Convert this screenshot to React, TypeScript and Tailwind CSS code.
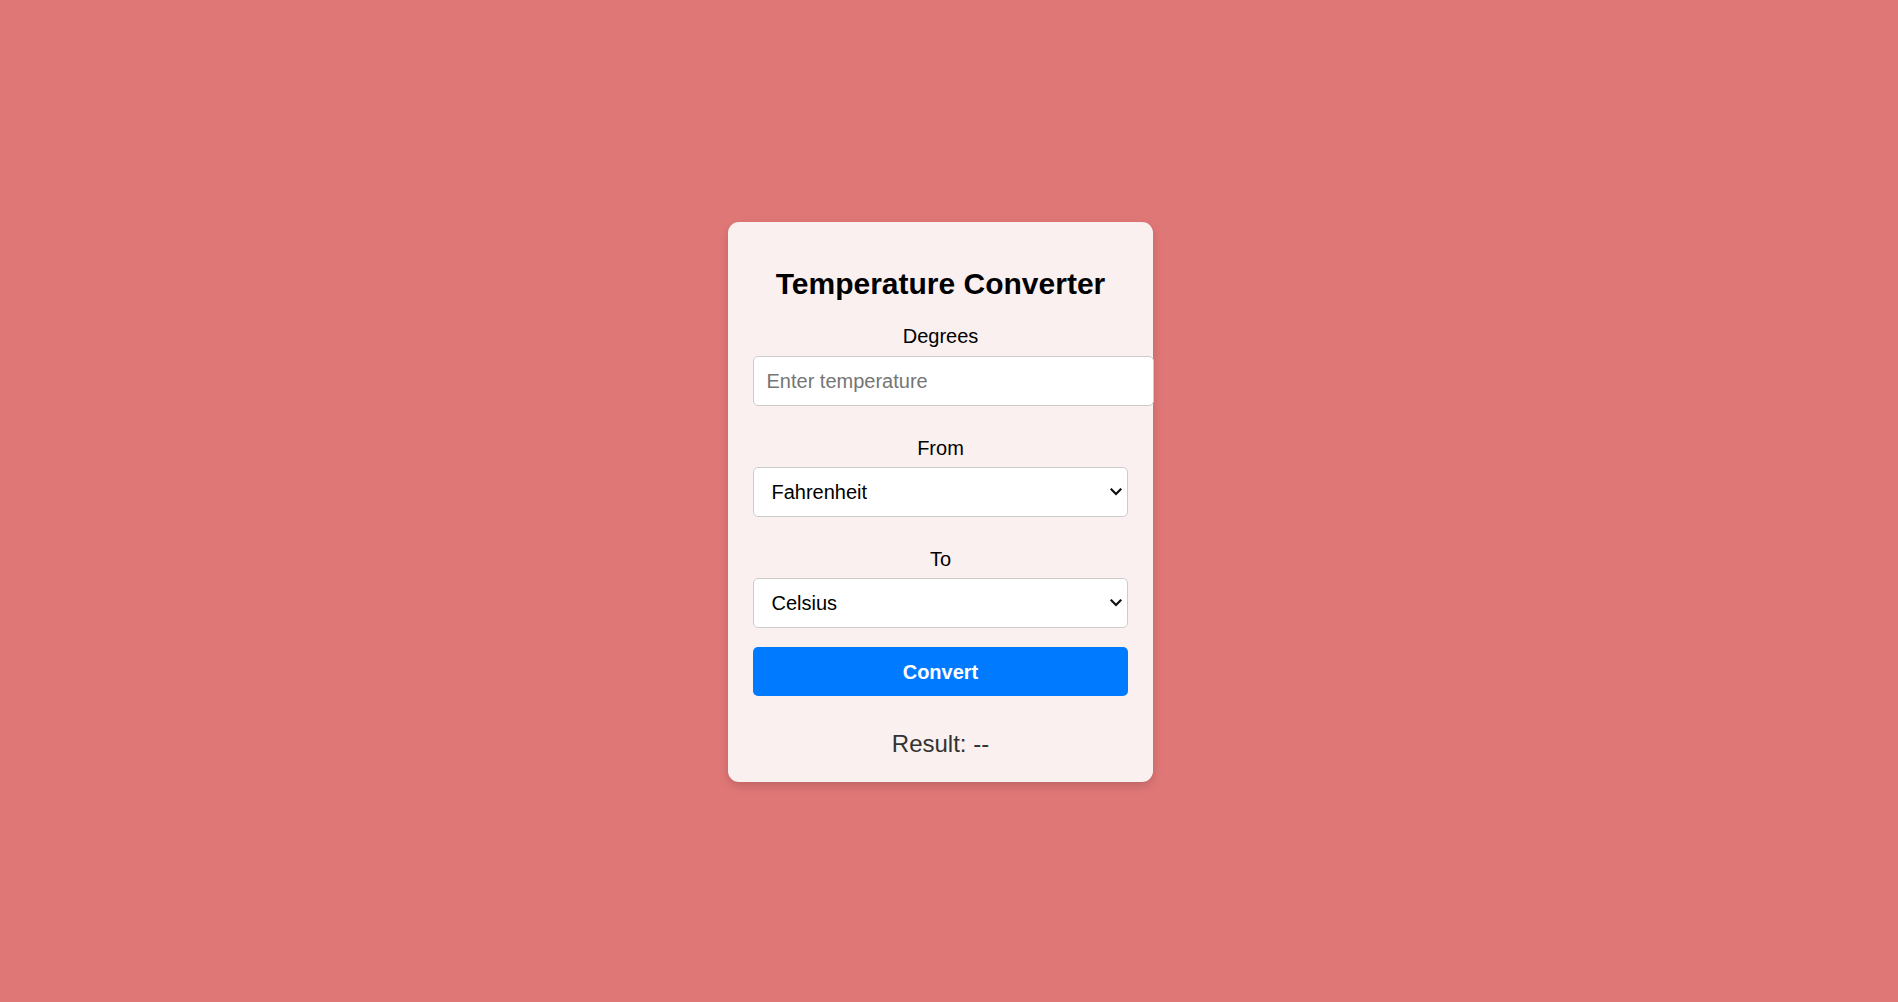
import { useState } from 'react';

const units = ['Celsius', 'Fahrenheit', 'Kelvin'];

const convert = (value: number, from: string, to: string) => {
  let celsius = value;
  if (from === 'Fahrenheit') celsius = ((value - 32) * 5) / 9;
  if (from === 'Kelvin') celsius = value - 273.15;
  if (to === 'Fahrenheit') return (celsius * 9) / 5 + 32;
  if (to === 'Kelvin') return celsius + 273.15;
  return celsius;
};

const UnitSelect = ({ value, onChange }: { value: string; onChange: (v: string) => void }) => (
  <div className="relative">
    <select
      value={value}
      onChange={(e) => onChange(e.target.value)}
      className="block h-[50px] w-full appearance-none rounded-[5px] border border-[#ccc] bg-white pr-[36px] pl-[17.5px] text-left text-[20px] text-black"
    >
      {units.map((unit) => (
        <option key={unit}>{unit}</option>
      ))}
    </select>
    <svg
      className="pointer-events-none absolute top-1/2 right-[6px] -translate-y-1/2"
      width="12"
      height="8"
      viewBox="0 0 12 8"
      fill="none"
    >
      <path d="M1.5 1.5 L6 6 L10.5 1.5" stroke="#111" strokeWidth="2.2" strokeLinecap="square" />
    </svg>
  </div>
);

export default function App() {
  const [degrees, setDegrees] = useState('');
  const [from, setFrom] = useState('Fahrenheit');
  const [to, setTo] = useState('Celsius');
  const [result, setResult] = useState('--');

  const handleConvert = () => {
    const value = parseFloat(degrees);
    if (Number.isNaN(value)) {
      setResult('--');
      return;
    }
    setResult(convert(value, from, to).toFixed(2));
  };

  return (
    <div className="flex min-h-screen items-center justify-center bg-[#e07777] font-['Liberation_Sans',Arial,sans-serif]">
      <div className="mt-[2px] mr-[17px] w-[425px] rounded-[11px] bg-[#fbf0f0] px-[25px] pt-[25px] pb-[25px] text-center shadow-[0_4px_10px_rgba(0,0,0,0.15)]">
        <h2 className="mt-[20px] text-[30px] leading-[34px] font-bold text-black">Temperature Converter</h2>

        <label className="mt-[24px] mb-[8px] block text-[20px] leading-[23px] text-black">Degrees</label>
        <input
          type="number"
          value={degrees}
          onChange={(e) => setDegrees(e.target.value)}
          placeholder="Enter temperature"
          className="block h-[50px] w-[401px] rounded-[5px] border border-[#ccc] bg-white px-[12.5px] text-left text-[20px] text-black placeholder:text-[#757575] focus:outline-none"
        />

        <label className="mt-[31px] mb-[7px] block text-[20px] leading-[23px] text-black">From</label>
        <UnitSelect value={from} onChange={setFrom} />

        <label className="mt-[31px] mb-[7px] block text-[20px] leading-[23px] text-black">To</label>
        <UnitSelect value={to} onChange={setTo} />

        <button
          onClick={handleConvert}
          className="mt-[19px] block h-[49px] w-full rounded-[5px] bg-[#007bff] text-[20px] font-bold text-white"
        >
          Convert
        </button>

        <p className="mt-[34px] text-[24px] leading-[27px] text-[#333]">Result: {result}</p>
      </div>
    </div>
  );
}
